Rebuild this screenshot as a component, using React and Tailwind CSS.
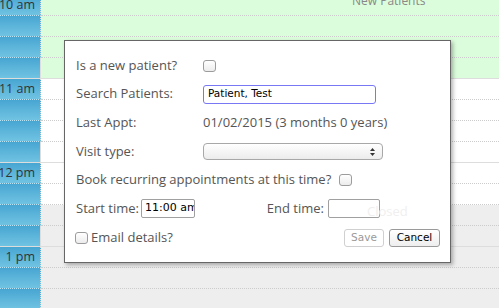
import React from "react";

const hours = [
  { label: "10 am", bg: ["bg-[#dcfddc]", "bg-[#dcfddc]", "bg-[#dcfddc]", "bg-[#dcfddc]"] },
  { label: "11 am", bg: ["bg-white", "bg-white", "bg-white", "bg-white"] },
  { label: "12 pm", bg: ["bg-white", "bg-white", "bg-[#eeeeee]", "bg-[#eeeeee]"] },
  { label: "1 pm", bg: ["bg-[#eeeeee]", "bg-[#eeeeee]", "bg-[#eeeeee]", "bg-[#eeeeee]"] },
];

function Checkbox({ className = "" }) {
  return (
    <span
      className={
        "inline-block w-[13px] h-[12px] rounded-[3px] border border-[#9c9c9c] bg-linear-to-b from-white to-[#ececec] shrink-0 " +
        className
      }
    />
  );
}

function Row({ h, children, className = "" }) {
  return <div className={"flex items-center " + h + " " + className}>{children}</div>;
}

const sys = { fontFamily: '"DejaVu Sans", sans-serif' };

export default function App() {
  return (
    <div
      className="relative w-[499px] h-[308px] overflow-hidden bg-white"
      style={{ fontFamily: '"Open Sans", sans-serif' }}
    >
      <div className="-mt-[5px]">
        {hours.map((hr) => (
          <div key={hr.label}>
            {[0, 1, 2, 3].map((i) => (
              <div key={i} className="flex h-[21px]">
                <div
                  className={
                    "w-[41px] shrink-0 border-r border-r-[#dddddd] bg-linear-to-b from-[#47a6d2] to-[#70c3e2] flex items-center justify-end pr-[5px] text-[12.5px] text-[#333] leading-none whitespace-nowrap " +
                    (i === 3
                      ? "border-b border-b-[#dddddd]"
                      : "border-b border-dotted border-b-[#b9e2f2]")
                  }
                >
                  {i === 0 ? hr.label : ""}
                </div>
                <div
                  className={
                    "flex-1 " +
                    hr.bg[i] +
                    " " +
                    (i === 3
                      ? "border-b border-b-[#dddddd]"
                      : "border-b border-dotted border-b-[#cccccc]")
                  }
                />
              </div>
            ))}
          </div>
        ))}
      </div>

      <div className="absolute left-[352px] top-[-7px] text-[12px] text-[#888] leading-[16px]">
        New Patients
      </div>

      <div className="absolute left-[64px] top-[40px] w-[387px] h-[223px] border border-[#666] bg-white shadow-[2px_2px_4px_rgba(0,0,0,0.3)] pl-[11px] pr-[10px] pt-[11px] text-[13px] text-[#555]">
        <Row h="h-[28px]">
          <span className="w-[127px] shrink-0">Is a new patient?</span>
          <Checkbox />
        </Row>
        <Row h="h-[28px]">
          <span className="w-[127px] shrink-0">Search Patients:</span>
          <div
            className="w-[173px] h-[19px] rounded-[3px] border border-[#7878f5] flex items-center pl-[4px] text-[10.5px] text-black"
            style={sys}
          >
            Patient, Test
          </div>
        </Row>
        <Row h="h-[29px]">
          <span className="w-[127px] shrink-0">Last Appt:</span>
          <span>01/02/2015 (3 months 0 years)</span>
        </Row>
        <Row h="h-[29px]">
          <span className="w-[127px] shrink-0">Visit type:</span>
          <div className="relative w-[180px] h-[17px] rounded-[4px] border border-[#a8a8a8] bg-linear-to-b from-white to-[#ececec]">
            <svg
              className="absolute right-[7px] top-[4px]"
              width="5"
              height="8"
              viewBox="0 0 5 8"
            >
              <path d="M0 3 L2.5 0 L5 3 Z" fill="#333" />
              <path d="M0 5 L2.5 8 L5 5 Z" fill="#333" />
            </svg>
          </div>
        </Row>
        <Row h="h-[28px]">
          <span>Book recurring appointments at this time?</span>
          <Checkbox className="ml-[8px]" />
        </Row>
        <Row h="h-[29px]">
          <span className="w-[65px] shrink-0">Start time:</span>
          <div
            className="w-[54px] h-[19px] rounded-[2px] border border-[#a0a0a0] flex items-center pl-[3px] text-[11px] text-black overflow-hidden whitespace-nowrap"
            style={sys}
          >
            <span className="shrink-0">11:00 am</span>
          </div>
          <span className="w-[133px] shrink-0 text-right pr-[4px]">End time:</span>
          <div className="w-[52px] h-[19px] rounded-[2px] border border-[#a0a0a0]" />
        </Row>
        <Row h="h-[29px]">
          <Checkbox className="-ml-[1px]" />
          <span className="ml-[3px]">Email details?</span>
          <div className="ml-auto flex gap-[5px]" style={sys}>
            <div className="w-[40px] h-[18px] rounded-[3px] border border-[#d0d0d0] bg-white flex items-center justify-center text-[10.5px] text-[#9a9a9a]">
              Save
            </div>
            <div className="w-[51px] h-[18px] rounded-[3px] border border-[#9a9a9a] bg-linear-to-b from-white to-[#eeeeee] flex items-center justify-center text-[10.5px] text-black">
              Cancel
            </div>
          </div>
        </Row>
      </div>

      <div className="absolute left-[367px] top-[202px] text-[13px] text-[#efefef] leading-[18px]">
        Closed
      </div>
    </div>
  );
}
